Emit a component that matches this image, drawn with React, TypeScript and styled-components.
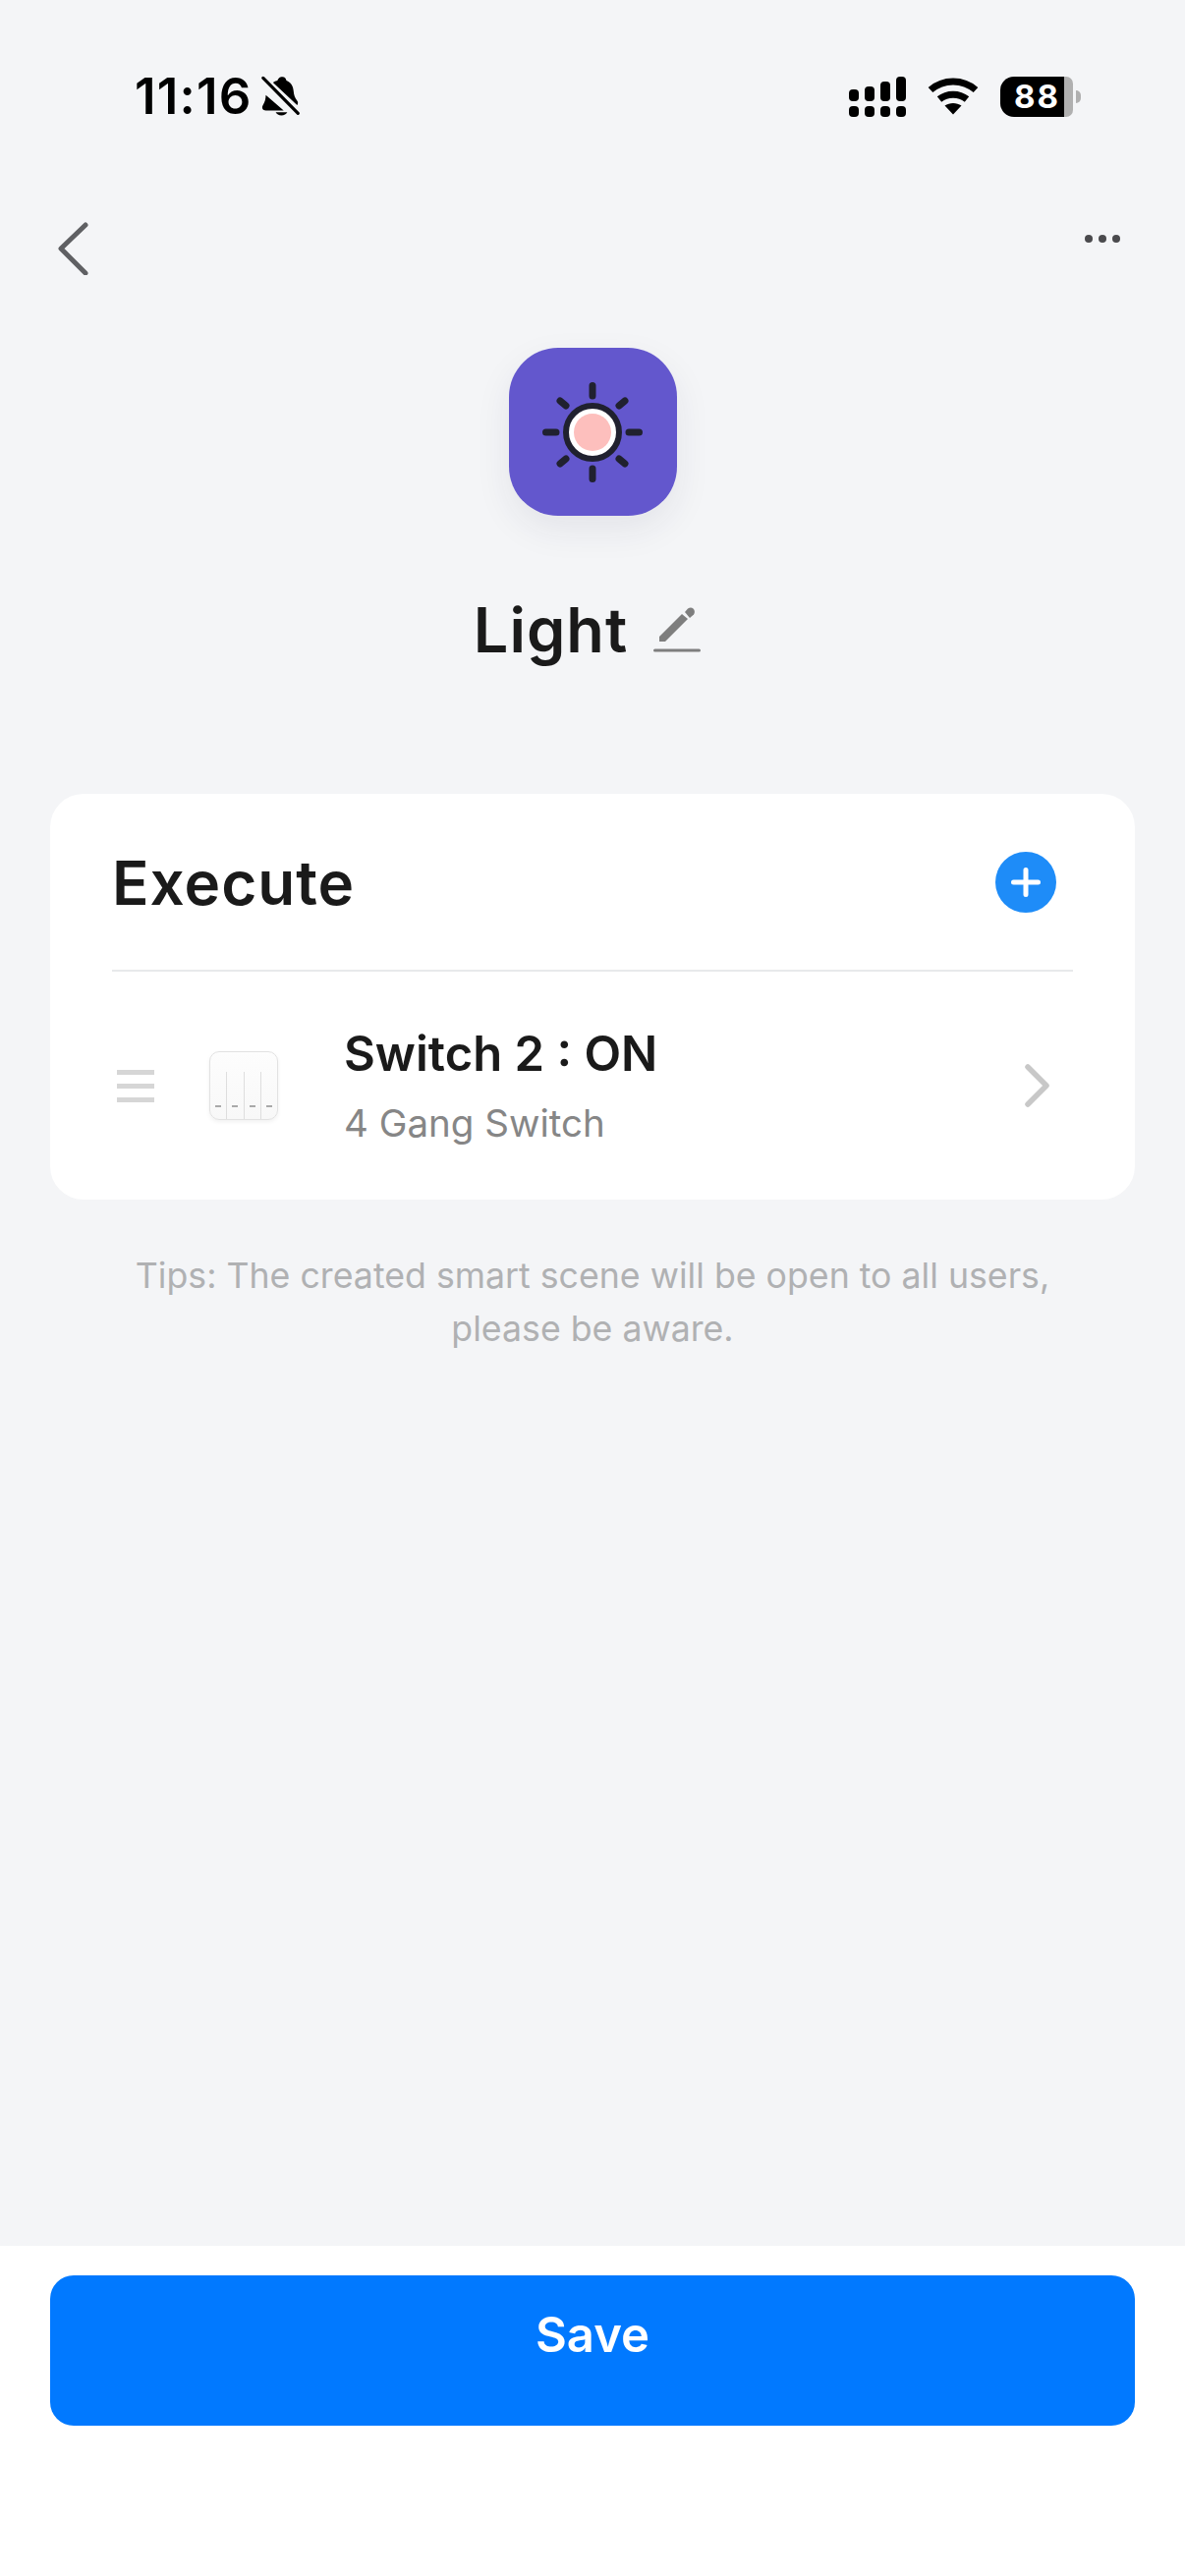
import React from 'react'
import styled, { createGlobalStyle } from 'styled-components'

const GlobalStyle = createGlobalStyle`
  * { box-sizing: border-box; margin: 0; padding: 0; }
  html, body { background: #f4f5f7; }
  body { font-family: Inter, "Noto Sans", sans-serif; }
`

const Page = styled.div`
  width: 1206px;
  height: 2622px;
  display: flex;
  flex-direction: column;
  background: #f4f5f7;
  overflow: hidden;
`

const StatusBar = styled.div`
  height: 196px;
  padding: 0 106px 0 137px;
  display: flex;
  justify-content: space-between;
  align-items: center;
`

const TimeGroup = styled.div`
  display: flex;
  align-items: center;
  gap: 9px;
`

const Time = styled.span`
  font-size: 51px;
  line-height: 60px;
  font-weight: 600;
  color: #000;
  letter-spacing: 1.2px;
`

const StatusIcons = styled.div`
  display: flex;
  align-items: center;
  gap: 22px;
`

const Battery = styled.div`
  position: relative;
  width: 74px;
  height: 41px;
  margin-right: 8px;
  border-radius: 14px 7px 7px 14px;
  background: linear-gradient(90deg, #000 0 65px, #b0b0b0 65px);
  color: #fff;
  font-size: 33px;
  line-height: 41px;
  font-weight: 700;
  padding-left: 14px;
  letter-spacing: 2px;

  &::after {
    content: '';
    position: absolute;
    right: -8px;
    top: 14px;
    width: 5px;
    height: 13px;
    background: #b0b0b0;
    border-radius: 0 7px 7px 0;
  }
`

const NavBar = styled.div`
  height: 158px;
  padding: 0 66px 0 58px;
  display: flex;
  justify-content: space-between;
  align-items: flex-start;
`

const BackButton = styled.button`
  border: 0;
  background: none;
  width: 34px;
  height: 54px;
  margin-top: 30px;
  display: flex;
`

const MoreButton = styled.div`
  display: flex;
  gap: 6px;
  margin-top: 43px;
`

const Dot = styled.span`
  width: 8px;
  height: 8px;
  border-radius: 50%;
  background: #4a4a4d;
`

const Hero = styled.div`
  display: flex;
  flex-direction: column;
  align-items: center;
`

const SceneIcon = styled.div`
  width: 171px;
  height: 171px;
  border-radius: 50px;
  background: #6357cd;
  box-shadow: 0 14px 36px rgba(40, 40, 80, 0.08);
  display: flex;
  align-items: center;
  justify-content: center;
`

const TitleRow = styled.div`
  margin-top: 78px;
  height: 76px;
  display: flex;
  align-items: center;
  gap: 26px;
  padding-right: 11px;
`

const Title = styled.h1`
  font-size: 63px;
  line-height: 76px;
  font-weight: 600;
  color: #1a1a1a;
  letter-spacing: 1px;
`

const Card = styled.section`
  margin: 129px 51px 0;
  height: 413px;
  background: #fff;
  border-radius: 34px;
  padding: 0 63px;
`

const CardHeader = styled.div`
  height: 181px;
  border-bottom: 2px solid #e8e9eb;
  display: flex;
  align-items: center;
  justify-content: space-between;
  padding-right: 17px;
`

const CardTitle = styled.h2`
  font-size: 62px;
  line-height: 72px;
  font-weight: 600;
  color: #1a1a1a;
  letter-spacing: 1px;
  padding-top: 3px;
`

const AddButton = styled.div`
  width: 62px;
  height: 62px;
  border-radius: 50%;
  background: #1e8cf8;
  display: flex;
  align-items: center;
  justify-content: center;
`

const ActionRow = styled.div`
  height: 232px;
  display: flex;
  align-items: center;
`

const DragHandle = styled.div`
  width: 38px;
  margin-left: 5px;
  display: flex;
  flex-direction: column;
  gap: 9px;
`

const DragLine = styled.span`
  height: 5px;
  background: #d6d6d6;
`

const DeviceThumb = styled.div`
  position: relative;
  width: 70px;
  height: 70px;
  margin-left: 56px;
  border-radius: 10px;
  border: 1px solid #e2e2e2;
  background: linear-gradient(180deg, #fdfdfd, #f8f8f8);
  box-shadow: 0 2px 4px rgba(0, 0, 0, 0.06);
  display: flex;
  padding-top: 20px;
`

const Gang = styled.div`
  flex: 1;
  display: flex;
  align-items: flex-end;
  justify-content: center;
  padding-bottom: 12px;
  & + & {
    border-left: 1px solid #dedede;
  }
  &::after {
    content: '';
    width: 6px;
    height: 2px;
    background: #a9a9a9;
  }
`

const ActionText = styled.div`
  margin-left: 67px;
  flex: 1;
  display: flex;
  flex-direction: column;
  gap: 19px;
`

const ActionTitle = styled.div`
  font-size: 49px;
  line-height: 57px;
  font-weight: 600;
  color: #1a1a1a;
`

const ActionSub = styled.div`
  font-size: 38.5px;
  line-height: 46px;
  font-weight: 400;
  color: #868686;
`

const Chevron = styled.svg`
  width: 28px;
  height: 44px;
  margin-right: 22px;
`

const Tips = styled.p`
  margin: 50px 120px 0;
  font-size: 35.7px;
  line-height: 54px;
  font-weight: 400;
  color: #b0b1b3;
  text-align: center;
`

const Footer = styled.div`
  margin-top: auto;
  height: 336px;
  background: #fff;
  padding: 30px 51px 0;
`

const SaveButton = styled.button`
  width: 100%;
  height: 153px;
  border: 0;
  border-radius: 24px;
  background: #0179ff;
  color: #fff;
  font-family: inherit;
  font-size: 49px;
  font-weight: 600;
  padding-bottom: 32px;
`

const BellOff = () => (
  <svg width="40" height="42" viewBox="0 0 44 46">
    <path d="M20 2.500c1.500-1.600 5-1.600 6.500 0 1 1 1.200 2 1.500 3 5 2 7.500 6 8 11.500.4 4.500 1.500 8 4 11 1.200 1.500 1.200 3.500 0 5L13 7.500c1.500-.9 3-1.500 5-2 .3-1 1-2.100 2-3zM5 21.500 25 39H5c-3.500 0-5-3-3.200-6C4 29 4.800 26 5 21.500zM16 41h13c-1 2.200-3.500 3.500-6.500 3.500S17 43.200 16 41z" fill="#000" />
    <path d="M1.500 2.500 41.500 43" stroke="#f4f5f7" strokeWidth="7" />
    <path d="M2 2.500 41 42" stroke="#000" strokeWidth="3.500" strokeLinecap="round" />
  </svg>
)

const Signal = () => (
  <svg width="58" height="41" viewBox="0 0 58 41" fill="#000">
    <rect x="0" y="13" width="10" height="12" rx="4" />
    <rect x="16" y="10" width="10" height="15" rx="4" />
    <rect x="32" y="5" width="10" height="20" rx="4" />
    <rect x="48" y="0" width="10" height="25" rx="4" />
    <rect x="0" y="30" width="10" height="11" rx="4" />
    <rect x="16" y="30" width="10" height="11" rx="4" />
    <rect x="32" y="30" width="10" height="11" rx="4" />
    <rect x="48" y="30" width="10" height="11" rx="4" />
  </svg>
)

const Wifi = () => (
  <svg width="52" height="38" viewBox="0 0 52 38" fill="none" stroke="#000" strokeWidth="7">
    <path d="M3 12.500C16 1 36 1 49 12.500" />
    <path d="M12 22c8-6.500 20-6.500 28 0" />
    <path d="M17.500 28.500 26 37.500l8.500-9c-5-3.500-12-3.500-17 0z" fill="#000" stroke="none" />
  </svg>
)

const BackArrow = () => (
  <svg width="34" height="54" viewBox="0 0 34 54" fill="none" stroke="#5f6063" strokeWidth="5" strokeLinecap="round" strokeLinejoin="round">
    <path d="M29 3 4 27l25 25" />
  </svg>
)

const SunIcon = () => (
  <svg width="110" height="110" viewBox="0 0 110 110">
    <circle cx="55" cy="55" r="27" fill="#fff" stroke="#20212f" strokeWidth="6" />
    <circle cx="55" cy="55" r="19" fill="#fdbfbd" />
    <g stroke="#20212f" strokeWidth="7" strokeLinecap="round">
      <path d="M55 7.500V18M55 92v10.500M7.500 55H18M92 55h10.500M22 23l6 5M88 23l-6 5M22 87l6-5M88 87l-6-5" />
    </g>
  </svg>
)

const EditIcon = () => (
  <svg width="48" height="46" viewBox="0 0 48 46" fill="#7e7e7e">
    <path d="M6 30 29 7l6 5-23 23H6z" />
    <path d="M32 5l3-3.500c2-1.500 4-1.500 5.500 0s2 4 .5 6L37 11z" />
    <rect x="0" y="42.500" width="48" height="3" rx="1.500" />
  </svg>
)

const PlusIcon = () => (
  <svg width="30" height="30" viewBox="0 0 30 30" stroke="#fff" strokeWidth="5" strokeLinecap="round">
    <path d="M15 2.500v25M2.500 15h25" />
  </svg>
)

export default function App() {
  return (
    <Page>
      <GlobalStyle />
      <StatusBar>
        <TimeGroup>
          <Time>11:16</Time>
          <BellOff />
        </TimeGroup>
        <StatusIcons>
          <Signal />
          <Wifi />
          <Battery>88</Battery>
        </StatusIcons>
      </StatusBar>
      <NavBar>
        <BackButton>
          <BackArrow />
        </BackButton>
        <MoreButton>
          <Dot />
          <Dot />
          <Dot />
        </MoreButton>
      </NavBar>
      <Hero>
        <SceneIcon>
          <SunIcon />
        </SceneIcon>
        <TitleRow>
          <Title>Light</Title>
          <EditIcon />
        </TitleRow>
      </Hero>
      <Card>
        <CardHeader>
          <CardTitle>Execute</CardTitle>
          <AddButton>
            <PlusIcon />
          </AddButton>
        </CardHeader>
        <ActionRow>
          <DragHandle>
            <DragLine />
            <DragLine />
            <DragLine />
          </DragHandle>
          <DeviceThumb>
            <Gang />
            <Gang />
            <Gang />
            <Gang />
          </DeviceThumb>
          <ActionText>
            <ActionTitle>Switch 2 : ON</ActionTitle>
            <ActionSub>4 Gang Switch</ActionSub>
          </ActionText>
          <Chevron viewBox="0 0 28 44" fill="none" stroke="#c8c8c8" strokeWidth="5.500" strokeLinecap="round" strokeLinejoin="round">
            <path d="M4 3l19 19L4 41" />
          </Chevron>
        </ActionRow>
      </Card>
      <Tips>Tips: The created smart scene will be open to all users, please be aware.</Tips>
      <Footer>
        <SaveButton>Save</SaveButton>
      </Footer>
    </Page>
  )
}
